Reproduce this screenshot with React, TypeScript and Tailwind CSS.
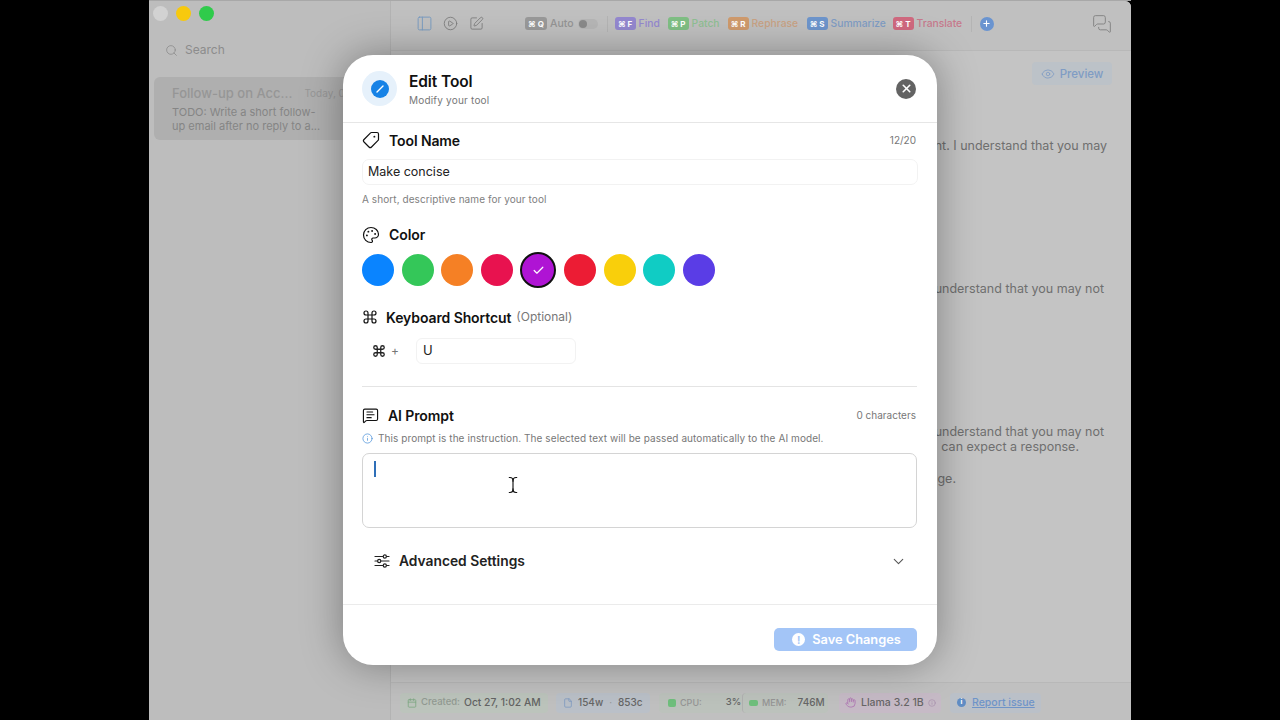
import {
  Calendar,
  Check,
  ChevronDown,
  CirclePlay,
  Command,
  Eye,
  File,
  Hand,
  Info,
  MessageSquareText,
  MessagesSquare,
  Palette,
  PanelLeft,
  Plus,
  Search,
  SquarePen,
  Tag,
  TextCursor,
  X,
} from "lucide-react";

const toolbarItems = [
  { key: "⌘ F", label: "Find", chip: "bg-[#9488cf]", text: "text-[#9488cf]", w: "w-[45px]" },
  { key: "⌘ P", label: "Patch", chip: "bg-[#7fbf84]", text: "text-[#8fbf93]", w: "w-[52px]" },
  { key: "⌘ R", label: "Rephrase", chip: "bg-[#cf9a6c]", text: "text-[#c9a284]", w: "w-[71px]" },
  { key: "⌘ S", label: "Summarize", chip: "bg-[#6d95cc]", text: "text-[#7f9cc4]", w: "w-[78px]" },
  { key: "⌘ T", label: "Translate", chip: "bg-[#d0697f]", text: "text-[#c67a8c]", w: "w-[70px]" },
];

const colors = [
  "bg-[#0a84ff]",
  "bg-[#34c759]",
  "bg-[#f58025]",
  "bg-[#e8124f]",
  "bg-[#af14d4]",
  "bg-[#ec1c34]",
  "bg-[#f9cf0b]",
  "bg-[#10ccc4]",
  "bg-[#5a3de6]",
];

function SectionTitle({ icon, title, gap = "gap-[9px]" }: { icon: React.ReactNode; title: string; gap?: string }) {
  return (
    <div className={`flex items-center ${gap}`}>
      {icon}
      <span className="text-[14px] font-semibold text-[#111] tracking-[-0.1px]">{title}</span>
    </div>
  );
}

function Sliders() {
  return (
    <svg width="16" height="14" viewBox="0 0 16 14" fill="none" stroke="#222" strokeWidth="1.2" strokeLinecap="round">
      <path d="M1 2.5h8M12.5 2.5H15M1 7h2.5M7 7h8M1 11.5h8M12.5 11.5H15" />
      <circle cx="10.8" cy="2.5" r="1.6" />
      <circle cx="5.2" cy="7" r="1.6" />
      <circle cx="10.8" cy="11.5" r="1.6" />
    </svg>
  );
}

function Sidebar() {
  return (
    <div className="w-[242px] shrink-0 bg-[#bdbdbd] border-r border-[#b3b3b3] flex flex-col">
      <div className="flex items-center gap-[8px] pl-[4px] pt-[5px]">
        <div className="w-[15px] h-[15px] rounded-full bg-[#d2d2d2]" />
        <div className="w-[15px] h-[15px] rounded-full bg-[#f7c90e]" />
        <div className="w-[15px] h-[15px] rounded-full bg-[#2fcb4b]" />
      </div>
      <div className="flex items-center gap-[7px] pl-[16px] mt-[20px] text-[#8c8c8c]">
        <Search size={13} strokeWidth={1.5} />
        <span className="text-[12px]">Search</span>
      </div>
      <div className="ml-[5px] mr-[4px] mt-[18px] h-[63px] rounded-[6px] bg-[#afafaf] pl-[18px] pt-[7px] overflow-hidden">
        <div className="flex items-center whitespace-nowrap">
          <span className="text-[13px] font-medium text-[#969696]">Follow-up on Acc...</span>
          <span className="ml-[12px] text-[10px] text-[#979797]">Today, 01</span>
        </div>
        <div className="text-[11px] leading-[14px] text-[#858585] mt-[1px] w-[150px]">
          TODO: Write a short follow-up email after no reply to a...
        </div>
      </div>
    </div>
  );
}

function Toolbar() {
  return (
    <div className="h-[50px] shrink-0 border-b border-[#b8b8b8] bg-[#c0c0c0] flex items-center pl-[25px] pb-[4px]">
      <PanelLeft size={17} strokeWidth={1.4} className="text-[#7a9cc0]" />
      <CirclePlay size={15} strokeWidth={1.4} className="ml-[10px] text-[#7d7d7d]" />
      <SquarePen size={15} strokeWidth={1.4} className="ml-[11px] text-[#7d7d7d]" />
      <span className="ml-[41px] w-[22px] h-[13px] rounded-[3px] bg-[#999] text-white text-[8px] font-bold flex items-center justify-center">⌘ Q</span>
      <span className="ml-[3px] text-[10.5px] font-medium text-[#949494]">Auto</span>
      <div className="ml-[4px] w-[20px] h-[10px] rounded-full bg-[#b6b6b6] flex items-center pl-[1px]">
        <div className="w-[8px] h-[8px] rounded-full bg-[#8a8a8a]" />
      </div>
      <div className="ml-[9px] w-px h-[16px] bg-[#b4b4b4]" />
      <div className="ml-[7px] flex items-center">
        {toolbarItems.map((item) => (
          <div key={item.key} className={`flex items-center gap-[3px] ${item.w} mr-[8px] whitespace-nowrap`}>
            <span className={`w-[21px] h-[13px] shrink-0 rounded-[3px] ${item.chip} text-white text-[8px] font-bold flex items-center justify-center`}>
              {item.key}
            </span>
            <span className={`text-[10.3px] font-medium ${item.text}`}>{item.label}</span>
          </div>
        ))}
      </div>
      <div className="w-px h-[16px] bg-[#b4b4b4]" />
      <div className="ml-[8px] w-[14px] h-[14px] rounded-full bg-[#6a94d0] flex items-center justify-center">
        <Plus size={9} strokeWidth={3} className="text-white" />
      </div>
      <MessagesSquare size={20} strokeWidth={1.2} className="ml-[98px] text-[#858585]" />
    </div>
  );
}

function StatusChip({ className, children }: { className: string; children: React.ReactNode }) {
  return (
    <div className={`h-[20px] rounded-[4px] flex items-center whitespace-nowrap text-[10px] ${className}`}>{children}</div>
  );
}

function StatusBar() {
  return (
    <div className="h-[38px] shrink-0 border-t border-[#b8b8b8] bg-[#c0c0c0] flex items-center pl-[9px] pt-[2px]">
      <StatusChip className="w-[148px] bg-[#bcc4bc] pl-[7px]">
        <Calendar size={10} className="text-[#80a884]" />
        <span className="ml-[4px] text-[#929a92] text-[9.5px] font-medium">Created:</span>
        <span className="ml-[4px] text-[#636363] text-[10.3px] font-medium">Oct 27, 1:02 AM</span>
      </StatusChip>
      <StatusChip className="ml-[8px] w-[94px] bg-[#bac0c8] pl-[7px]">
        <File size={10} className="text-[#7f9ac0]" />
        <span className="ml-[5px] text-[#666] font-medium">154w</span>
        <span className="ml-[6px] text-[#999]">·</span>
        <span className="ml-[6px] text-[#666] font-medium">853c</span>
      </StatusChip>
      <StatusChip className="ml-[9px] w-[83px] bg-[#bcc2bc] pl-[9px]">
        <span className="w-[8px] h-[8px] rounded-[2px] bg-[#6fbf7c]" />
        <span className="ml-[4px] text-[#949494] text-[9px] font-medium">CPU:</span>
        <span className="ml-[24px] text-[#666] text-[9.5px] font-medium">3%</span>
      </StatusChip>
      <StatusChip className="w-[86px] bg-[#bcc2bc] pl-[6px] border-l border-[#b0b0b0]">
        <span className="w-[9px] h-[6px] rounded-[2px] bg-[#6fbf7c]" />
        <span className="ml-[4px] text-[#949494] text-[9px] font-medium">MEM:</span>
        <span className="ml-[11px] text-[#666] font-medium">746M</span>
      </StatusChip>
      <StatusChip className="ml-[11px] w-[102px] bg-[#c6bac6] pl-[6px]">
        <Hand size={11} className="text-[#b07ab4]" />
        <span className="ml-[5px] text-[#666] text-[10.5px] font-medium">Llama 3.2 1B</span>
        <Info size={8} className="ml-[4px] text-[#a890ac]" />
      </StatusChip>
      <StatusChip className="ml-[9px] w-[91px] bg-[#bac0c8] pl-[7px]">
        <span className="w-[9px] h-[9px] rounded-full bg-[#5f8cc4] text-white text-[7px] font-bold flex items-center justify-center">i</span>
        <span className="ml-[6px] text-[#6f94c8] text-[10.5px] font-medium underline">Report issue</span>
      </StatusChip>
    </div>
  );
}

function MainPane() {
  return (
    <div className="flex-1 flex flex-col bg-[#c4c4c4] min-w-0 rounded-tr-[6px] overflow-hidden">
      <Toolbar />
      <div className="flex-1 flex flex-col items-end text-[12.5px] leading-[16px] text-[#6f6f6f] whitespace-nowrap overflow-hidden">
        <div className="mt-[11px] mr-[19px] h-[23px] w-[80px] rounded-[4px] bg-[#bcc2c8] flex items-center justify-center gap-[5px] text-[#7f9cc4] text-[11.5px] font-medium">
          <Eye size={14} strokeWidth={1.4} />
          <span>Preview</span>
        </div>
        <div className="mt-[53px] mr-[24px]">ent. I understand that you may</div>
        <div className="mt-[127px] mr-[27px]">understand that you may not</div>
        <div className="mt-[127px] mr-[27px]">understand that you may not</div>
        <div className="mr-[52px] mt-[-1px]">can expect a response.</div>
        <div className="mr-[175px] mt-[16px]">ge.</div>
      </div>
      <StatusBar />
    </div>
  );
}

function EditToolModal() {
  return (
    <div className="absolute left-[343px] top-[55px] w-[594px] h-[610px] rounded-[30px] bg-white shadow-[0_0_40px_rgba(0,0,0,0.35)] flex flex-col overflow-hidden font-['Inter',sans-serif]">
      <div className="h-[68px] shrink-0 border-b border-[#e6e6e6] flex items-center pl-[19px] pr-[21px]">
        <div className="w-[35px] h-[35px] rounded-full bg-[#e6f1fb] flex items-center justify-center">
          <div className="w-[18px] h-[18px] rounded-full bg-[#1682e6] flex items-center justify-center">
            <svg width="10" height="10" viewBox="0 0 10 10" fill="none" stroke="#fff" strokeWidth="1.4" strokeLinecap="round">
              <path d="M2 8L8 2" />
            </svg>
          </div>
        </div>
        <div className="ml-[12px] flex flex-col pt-[2px]">
          <span className="text-[15.5px] leading-[19px] font-semibold text-[#111] tracking-[-0.1px]">Edit Tool</span>
          <span className="text-[10px] leading-[14px] mt-[2px] text-[#777] tracking-[0.2px]">Modify your tool</span>
        </div>
        <button className="ml-auto w-[20px] h-[20px] rounded-full bg-[#636363] flex items-center justify-center">
          <X size={13} strokeWidth={3} className="text-white" />
        </button>
      </div>

      <div className="flex-1 flex flex-col px-[19px] min-h-0">
        <div className="mt-[8px] h-[18px] flex items-center justify-between">
          <SectionTitle icon={<Tag size={18} strokeWidth={1.6} className="text-[#111] -scale-x-100" />} title="Tool Name" />
          <span className="text-[10px] text-[#777] pr-[2px]">12/20</span>
        </div>
        <div className="mt-[10px] h-[26px] rounded-[7px] border border-[#f2f2f2] flex items-center pl-[5px] text-[12.5px] text-[#222]">
          Make concise
        </div>
        <div className="mt-[8px] text-[10px] leading-[12px] text-[#808080] tracking-[0.08px]">A short, descriptive name for your tool</div>

        <div className="mt-[19px] h-[18px]">
          <SectionTitle icon={<Palette size={18} strokeWidth={1.6} className="text-[#111]" />} title="Color" />
        </div>
        <div className="mt-[10px] h-[36px] flex items-center gap-[7.6px]">
          {colors.map((color, i) =>
            i === 4 ? (
              <div key={color} className={`w-[36px] h-[36px] rounded-full border-2 border-[#111] ${color} flex items-center justify-center`}>
                <Check size={13} strokeWidth={2.2} className="text-white" />
              </div>
            ) : (
              <div key={color} className={`w-[32px] h-[32px] rounded-full ${color}`} />
            ),
          )}
        </div>

        <div className="mt-[20px] h-[18px] flex items-center">
          <SectionTitle icon={<Command size={16} strokeWidth={1.8} className="text-[#111]" />} title="Keyboard Shortcut" gap="gap-[8px]" />
          <span className="ml-[5px] text-[12px] text-[#777]">(Optional)</span>
        </div>
        <div className="mt-[12px] h-[26px] flex items-center">
          <Command size={14} strokeWidth={2.2} className="ml-[10px] text-[#222]" />
          <span className="ml-[5px] text-[12px] text-[#777]">+</span>
          <div className="ml-[17px] w-[160px] h-[26px] rounded-[6px] border border-[#f2f2f2] flex items-center pl-[6px] text-[13px] text-[#222]">
            U
          </div>
        </div>

        <div className="mt-[22px] h-px mr-[1px] bg-[#e4e4e4]" />

        <div className="mt-[19px] h-[18px] flex items-center justify-between">
          <SectionTitle icon={<MessageSquareText size={17} strokeWidth={1.6} className="text-[#111]" />} title="AI Prompt" />
          <span className="text-[10px] text-[#777] pr-[2px]">0 characters</span>
        </div>
        <div className="mt-[7px] h-[14px] flex items-center gap-[5px]">
          <Info size={11} strokeWidth={1.6} className="text-[#4a90d9]" />
          <span className="text-[10px] text-[#777] tracking-[0.08px]">
            This prompt is the instruction. The selected text will be passed automatically to the AI model.
          </span>
        </div>
        <div className="relative mt-[8px] h-[75px] mr-[1px] rounded-[7px] border border-[#d4d4d4] pl-[11px] pt-[7px]">
          <div className="w-[2px] h-[16px] bg-[#2f6fb8]" />
          <TextCursor size={18} strokeWidth={1.5} className="absolute left-[141px] top-[22px] text-[#111]" />
        </div>

        <div className="mt-[23px] h-[20px] flex items-center pl-[12px] pr-[11px]">
          <Sliders />
          <span className="ml-[9px] text-[13.8px] font-semibold text-[#222]">Advanced Settings</span>
          <ChevronDown size={17} strokeWidth={1.5} className="ml-auto text-[#555]" />
        </div>
      </div>

      <div className="h-[61px] shrink-0 border-t border-[#ebebeb] flex items-start justify-end pr-[20px] pt-[23px]">
        <button className="w-[143px] h-[23px] rounded-[5px] bg-[#a3c5f7] flex items-center justify-center gap-[7px] pl-[2px] text-white text-[12.8px] font-semibold">
          <span className="w-[13px] h-[13px] rounded-full bg-white text-[#a3c5f7] text-[10px] font-bold leading-none flex items-center justify-center">!</span>
          <span>Save Changes</span>
        </button>
      </div>
    </div>
  );
}

export default function App() {
  return (
    <div className="relative w-[1280px] h-[720px] bg-black overflow-hidden font-['Inter',sans-serif]">
      <div className="absolute left-[149px] top-0 w-[982px] h-[720px] flex border-t border-[#a8a8a8]">
        <Sidebar />
        <MainPane />
      </div>
      <EditToolModal />
    </div>
  );
}
